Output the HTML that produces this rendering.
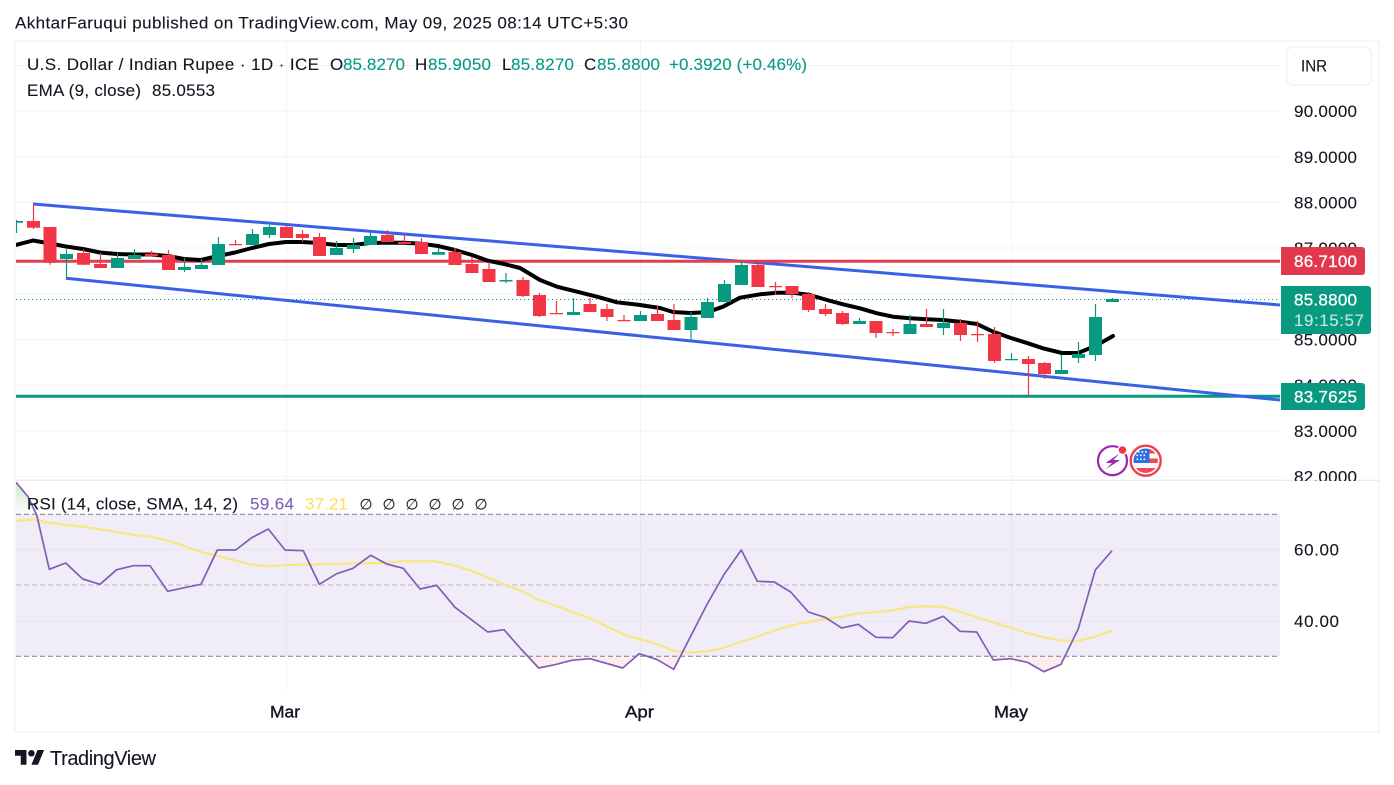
<!DOCTYPE html>
<html><head><meta charset="utf-8"><title>USDINR chart</title>
<style>
html,body{margin:0;padding:0;background:#fff;width:1394px;height:785px;overflow:hidden}
svg{position:absolute;left:0;top:0;display:block}
text{font-family:"Liberation Sans","DejaVu Sans",sans-serif;font-size:17px;fill:#131722;stroke:#131722;stroke-width:.12;white-space:pre}
.g{fill:#089981;stroke:#089981}.t{fill:#fff;stroke:#fff;stroke-width:.3}
</style></head><body>
<svg width="1394" height="785" viewBox="0 0 1394 785" xmlns="http://www.w3.org/2000/svg">
<defs>
<clipPath id="c"><rect x="16" y="42" width="1264" height="438"/></clipPath>
<clipPath id="r"><rect x="16" y="481" width="1264" height="209"/></clipPath>
<clipPath id="up"><rect x="16" y="481" width="1264" height="33"/></clipPath>
<clipPath id="dn"><rect x="16" y="656.5" width="1264" height="33"/></clipPath>
<clipPath id="ax"><rect x="1285" y="42" width="94" height="439"/></clipPath>
<linearGradient id="gg" x1="0" y1="0" x2="0" y2="1"><stop offset="0" stop-color="#4caf50" stop-opacity=".3"/><stop offset="1" stop-color="#4caf50" stop-opacity="0"/></linearGradient>
</defs>
<text x="15" y="28.5" textLength="613" lengthAdjust="spacing">AkhtarFaruqui published on TradingView.com, May 09, 2025 08:14 UTC+5:30</text>
<rect x="15" y="41" width="1364" height="691" fill="none" stroke="#f1f3f6" stroke-width="1.6"/>

<g stroke="#f2f3f6" stroke-width="1" fill="none">
<path d="M16 65.5H1280M16 111H1280M16 156.8H1280M16 202.3H1280M16 248H1280M16 294H1280M16 339.5H1280M16 385.3H1280M16 431H1280M16 476.7H1280"/>
<path d="M286.5 42V690M640.5 42V690M1011.5 42V690"/>
</g>
<path d="M16 480.3H1379" stroke="#e6e8ec" stroke-width="1.2"/>

<g clip-path="url(#c)" fill="none">
<path d="M16 299.5H1280" stroke="#089981" stroke-width="1" stroke-dasharray="1 3"/>
<path d="M16 396.3H1280" stroke="#089981" stroke-width="3"/>
<path d="M33 204L1280 305M66 278.3L1280 400" stroke="#3861e6" stroke-width="3"/>
<path d="M16 261.2H1280" stroke="#e03e52" stroke-width="3"/>
<polyline stroke="#000" stroke-width="4" stroke-linejoin="round" stroke-linecap="round" points="16,245 33,240.5 50,243.5 66,246.5 83,249 100,252.5 117,254 134,254.5 151,254.5 168,256 184,259 201,260 218,256 235,252.5 252,248 269,244 286,242 302,242 319,243 336,245 353,245 370,243 387,242.7 404,242.7 421,243.7 438,246 455,250 472,255 488,260.7 504,264 520,268 540,280 557,286.7 577,291.7 597,296.7 617,302.3 640,305 660,308 673,312 690,313 707,312.3 723,306.7 740,297.7 760,294.3 777,292.7 793,292.7 810,295 827,300 843,304.3 860,308.3 877,313.3 893,316.7 910,318.3 927,319.3 943,320 960,321.7 977,324 993,331.7 1011,338 1028,343.3 1043,348.3 1062,353 1078,353 1096,345.7 1113,336"/>
<path stroke="#089981" stroke-width="1.2" d="M16.5 220V233M66.5 249.3V278M117.5 253V268M134.5 249V259M184.5 258V272M201.5 259V269M218.5 237V265M252.5 229V245M269.5 225V238M336.5 241V255M353.5 238V253M370.5 233V245M438.5 248V254.7M506 273V283M573.5 298V315M640.5 311V321M691 312V340M707.5 298V318M724.5 280V302M741.5 262V285M859.5 318V324M910 315V334M943.5 309V335M1011.5 353V360M1061.5 355V374M1078.5 342V363M1095.5 304V361M1112.5 298V302"/>
<path fill="#089981" d="M10 221h13v1.7h-13zM60 254h13v5h-13zM111 258h13v10h-13zM128 255h13v4h-13zM178 267h13v3h-13zM195 265h13v4h-13zM212 244h13v21h-13zM246 234h13v11h-13zM263 227h13v8h-13zM330 248h13v7h-13zM347 245h13v4h-13zM364 236h13v9h-13zM432 252h13v2.7h-13zM499.5 280h13v1.5h-13zM567 312h13v3h-13zM634 315h13v6h-13zM684.5 317h13v13h-13zM701 302h13v16h-13zM718 284h13v18h-13zM735 265h13v20h-13zM853 321h13v3h-13zM903.5 324h13v10h-13zM937 323h13v5h-13zM1005 359h13v1.2h-13zM1055 370h13v4h-13zM1072 354h13v4h-13zM1089 317h13v38h-13zM1106 299h13v3h-13z"/>
<path stroke="#f23645" stroke-width="1.2" d="M33.5 204V229M50 227V264.7M83.5 249.3V265M100.5 253V268M151.5 251V256.3M168.5 250V270M235.5 240V245.3M286.5 226V238M302.5 230V242M319.5 233V256M387.5 230V242M404.5 234V244M421.5 238V254M455 248V265M472 257V273M489 262V282M523 277V297M539.5 293V317M556.5 301V314M590 298V312M607 304V321M624 315V321M657.5 306V321M674 304V330M758 262V287M775.5 282V295M792 286V298M808.5 292V312M825.5 304V316M842.5 311V325M876 321V338M893 329V336M926.5 309V327M960.5 319V341M977.5 321V342M994.5 327V363M1028.5 356V395M1044.5 362V379"/>
<path fill="#f23645" d="M27 221h13v6.7h-13zM43.5 227h13v35.7h-13zM77 253h13v11.7h-13zM94 264h13v4h-13zM145 253.7h13v2.6h-13zM162 255h13v15h-13zM229 244h13v1.3h-13zM280 227h13v11h-13zM296 234h13v4h-13zM313 237h13v19h-13zM381 235h13v7h-13zM398 242h13v2h-13zM415 242h13v12h-13zM448.5 252h13v13h-13zM465.5 264h13v9h-13zM482.5 269h13v13h-13zM516.5 280h13v16h-13zM533 295h13v21h-13zM550 313h13v1.2h-13zM583.5 304h13v8h-13zM600.5 309h13v8h-13zM617.5 320h13v1.2h-13zM651 314h13v7h-13zM667.5 320h13v10h-13zM751.5 265h13v22h-13zM769 286h13v1.2h-13zM785.5 286h13v8h-13zM802 294h13v16h-13zM819 309h13v5h-13zM836 313h13v11h-13zM869.5 321h13v12h-13zM886.5 332h13v1.2h-13zM920 324h13v3h-13zM954 323h13v12h-13zM971 334h13v1.2h-13zM988 334h13v27h-13zM1022 359h13v5h-13zM1038 363h13v11h-13z"/>
</g>

<g>
<circle cx="1112.5" cy="460.7" r="14.5" fill="#fff" stroke="#9c27b0" stroke-width="2.2"/>
<path d="M1119.5 453.5L1105.5 463H1112L1106 469L1120 460H1113.5Z" fill="#9c27b0"/>
<circle cx="1122.5" cy="450" r="5.2" fill="#fff"/><circle cx="1122.5" cy="450" r="3.8" fill="#f23645"/>
<circle cx="1145.7" cy="460.7" r="15" fill="#fff" stroke="#ec3f4c" stroke-width="2.4"/>
<clipPath id="fl"><circle cx="1145.7" cy="460.7" r="12.2"/></clipPath>
<g clip-path="url(#fl)">
<rect x="1133" y="448" width="26" height="26" fill="#f7f8fa"/>
<path d="M1149 449H1160V453.5H1149ZM1149 458.5H1160V463H1149ZM1133 468H1160V474H1133Z" fill="#ec4a55"/>
<rect x="1133" y="448" width="16.5" height="15" fill="#2f6fe0"/>
<path d="M1138 451h1.6v1.6h-1.6zM1141.5 451h1.6v1.6h-1.6zM1145 451h1.6v1.6h-1.6zM1136.5 454.5h1.6v1.6h-1.6zM1140 454.5h1.6v1.6h-1.6zM1143.5 454.5h1.6v1.6h-1.6zM1136.5 458.5h1.6v1.6h-1.6zM1140 458.5h1.6v1.6h-1.6zM1143.5 458.5h1.6v1.6h-1.6z" fill="#fff"/>
</g>
</g>

<rect x="16" y="514.3" width="1264" height="142" fill="#7e57c2" fill-opacity=".115"/>
<g stroke-width="1" fill="none">
<path d="M16 549.7H1280M16 621H1280" stroke="#e7e3f1"/>
<path d="M286.5 514V656M640.5 514V656M1011.5 514V656" stroke="#e7e3f1"/>
<path d="M16 514.3H1280M16 656.3H1280" stroke="#787b86" stroke-dasharray="5 3"/>
<path d="M16 585H1280" stroke="#b8b8c0" stroke-dasharray="5 3"/>
</g>
<polygon clip-path="url(#up)" fill="url(#gg)" points="16,481 16,482.3 28,496.7 36.7,515 16,515"/>
<polygon clip-path="url(#dn)" fill="#f23645" fill-opacity=".09" points="504,629.7 521,649 538.7,668 555,664.7 571.7,660.3 590,658.7 622.7,668 639.3,653.7 657.3,659.7 673.7,669.3 706.7,605 504,605"/>
<polygon clip-path="url(#dn)" fill="#f23645" fill-opacity=".09" points="976.7,632 993.3,660 1010.7,658.7 1027.3,662.3 1044,671.7 1061,664.3 1078.3,628.7"/>
<g clip-path="url(#r)" fill="none" stroke-linejoin="round">
<polyline stroke="#fae67f" stroke-width="2.2" points="16,521 35,519.3 49,522.7 66.7,525 83,526.7 100,529.3 133,534.7 150,536.7 170,541 200,551.7 233,560 250,564.3 268,566.3 287,565 333,564 380,563 403,561.3 435,561.3 455,565.7 471.7,570.7 503.3,584.3 521.7,591 538.3,599.7 556.7,606 590,618.3 623.3,634.3 640,639.3 656.7,644 673.3,650.7 690,652.7 706.7,651.3 723.3,648 740,642 756.7,637 770,632 790,625.7 810,621.7 825,619 840,617 858.3,613.3 875,612.3 892.7,610.3 909,607 925.7,606.3 943.3,607 960,611.7 976.7,617.3 993.3,622.3 1010.7,627.7 1027.3,633 1044,637.3 1061,640.7 1078.3,640.7 1095.3,636.7 1112,630.7"/>
<polyline stroke="#7e5fb5" stroke-width="1.7" points="16,482.3 28,496.7 36.7,515 49.3,569.3 65.7,563 82.7,579 100,584.3 116.7,569.7 133.3,565.7 150,565.7 167.7,591.3 184.3,587.7 201,584.3 217.3,550 235.7,550 251.7,537.7 268.3,529 285,550 303.3,550.7 319.3,584.3 336.7,573.7 353,568.3 370.7,555.3 386.7,564 403.3,568.3 420,589 436.7,585.3 455,607.3 487.7,632 504,629.7 521,649 538.7,668 555,664.7 571.7,660.3 590,658.7 622.7,668 639.3,653.7 657.3,659.7 673.7,669.3 706.7,605 724.3,574 741.3,550 757.3,581.3 774.3,582 790.7,592 808.3,612 825,617.3 841.7,628 858.3,624.3 876,637.3 892.7,637.7 909,621 925.7,623.3 943.3,616.3 960,631.3 976.7,632 993.3,660 1010.7,658.7 1027.3,662.3 1044,671.7 1061,664.3 1078.3,628.7 1095.3,570 1112,550.7"/>
</g>

<text x="27" y="70" textLength="292" lengthAdjust="spacing">U.S. Dollar / Indian Rupee · 1D · ICE</text>
<text x="330" y="70">O</text><text class="g" x="343" y="70" textLength="62" lengthAdjust="spacing">85.8270</text>
<text x="415" y="70">H</text><text class="g" x="428" y="70" textLength="63" lengthAdjust="spacing">85.9050</text>
<text x="502" y="70">L</text><text class="g" x="511" y="70" textLength="63" lengthAdjust="spacing">85.8270</text>
<text x="584" y="70">C</text><text class="g" x="597" y="70" textLength="63" lengthAdjust="spacing">85.8800</text>
<text class="g" x="669" y="70" textLength="138" lengthAdjust="spacing">+0.3920 (+0.46%)</text>
<text x="27" y="96" textLength="114" lengthAdjust="spacing">EMA (9, close)</text>
<text x="152" y="96" textLength="63" lengthAdjust="spacing">85.0553</text>

<text x="27" y="509.5" textLength="211" lengthAdjust="spacing">RSI (14, close, SMA, 14, 2)</text>
<text x="250" y="509.5" textLength="44" lengthAdjust="spacing" style="fill:#7e5fb5;stroke:#7e5fb5">59.64</text>
<text x="305" y="509.5" textLength="43" lengthAdjust="spacing" style="fill:#fde25a;stroke:#fde25a">37.21</text>
<text x="359.5" y="509.5" style="font-size:15px">∅</text><text x="382.5" y="509.5" style="font-size:15px">∅</text><text x="405.5" y="509.5" style="font-size:15px">∅</text><text x="428.5" y="509.5" style="font-size:15px">∅</text><text x="451.5" y="509.5" style="font-size:15px">∅</text><text x="474.5" y="509.5" style="font-size:15px">∅</text>

<rect x="1286.5" y="47" width="85" height="38" rx="6" fill="#fff" stroke="#f0f2f5" stroke-width="1.5"/>
<text x="1301" y="71.5" textLength="26" lengthAdjust="spacingAndGlyphs">INR</text>

<g clip-path="url(#ax)">
<text x="1294" y="117" textLength="63" lengthAdjust="spacing">90.0000</text>
<text x="1294" y="163" textLength="63" lengthAdjust="spacing">89.0000</text>
<text x="1294" y="208.5" textLength="63" lengthAdjust="spacing">88.0000</text>
<text x="1294" y="254" textLength="63" lengthAdjust="spacing">87.0000</text>
<text x="1294" y="345.5" textLength="63" lengthAdjust="spacing">85.0000</text>
<text x="1294" y="391" textLength="63" lengthAdjust="spacing">84.0000</text>
<text x="1294" y="437" textLength="63" lengthAdjust="spacing">83.0000</text>
<text x="1294" y="482.5" textLength="63" lengthAdjust="spacing">82.0000</text>
</g>
<text x="1294" y="555.5" textLength="45" lengthAdjust="spacing">60.00</text>
<text x="1294" y="627" textLength="45" lengthAdjust="spacing">40.00</text>

<path d="M1281 247H1362a3 3 0 0 1 3 3V272a3 3 0 0 1 -3 3H1281Z" fill="#e0394e"/>
<text class="t" x="1294" y="267" textLength="63" lengthAdjust="spacing">86.7100</text>
<path d="M1281 286H1368a3 3 0 0 1 3 3V331a3 3 0 0 1 -3 3H1281Z" fill="#089981"/>
<text class="t" x="1294" y="305.5" textLength="63" lengthAdjust="spacing">85.8800</text>
<text x="1294" y="326" textLength="70" lengthAdjust="spacing" style="fill:#c4e8e0;stroke:#c4e8e0">19:15:57</text>
<path d="M1281 383H1362a3 3 0 0 1 3 3V407a3 3 0 0 1 -3 3H1281Z" fill="#089981"/>
<text class="t" x="1294" y="402.5" textLength="63" lengthAdjust="spacing">83.7625</text>

<text x="270" y="717.5" textLength="30" lengthAdjust="spacingAndGlyphs" style="stroke-width:.4">Mar</text>
<text x="625" y="717.5" textLength="29" lengthAdjust="spacingAndGlyphs" style="stroke-width:.4">Apr</text>
<text x="994" y="717.5" textLength="34" lengthAdjust="spacingAndGlyphs" style="stroke-width:.4">May</text>

<g transform="translate(15 746.7) scale(.82)" fill="#131722">
<path d="M14 22H7V11H0V4h14v18zM28 22h-8l7.5-18h8L28 22z"/><circle cx="20" cy="8" r="4"/>
</g>
<text x="50" y="765" textLength="106" lengthAdjust="spacing" style="font-size:20px">TradingView</text>
</svg>
</body></html>
